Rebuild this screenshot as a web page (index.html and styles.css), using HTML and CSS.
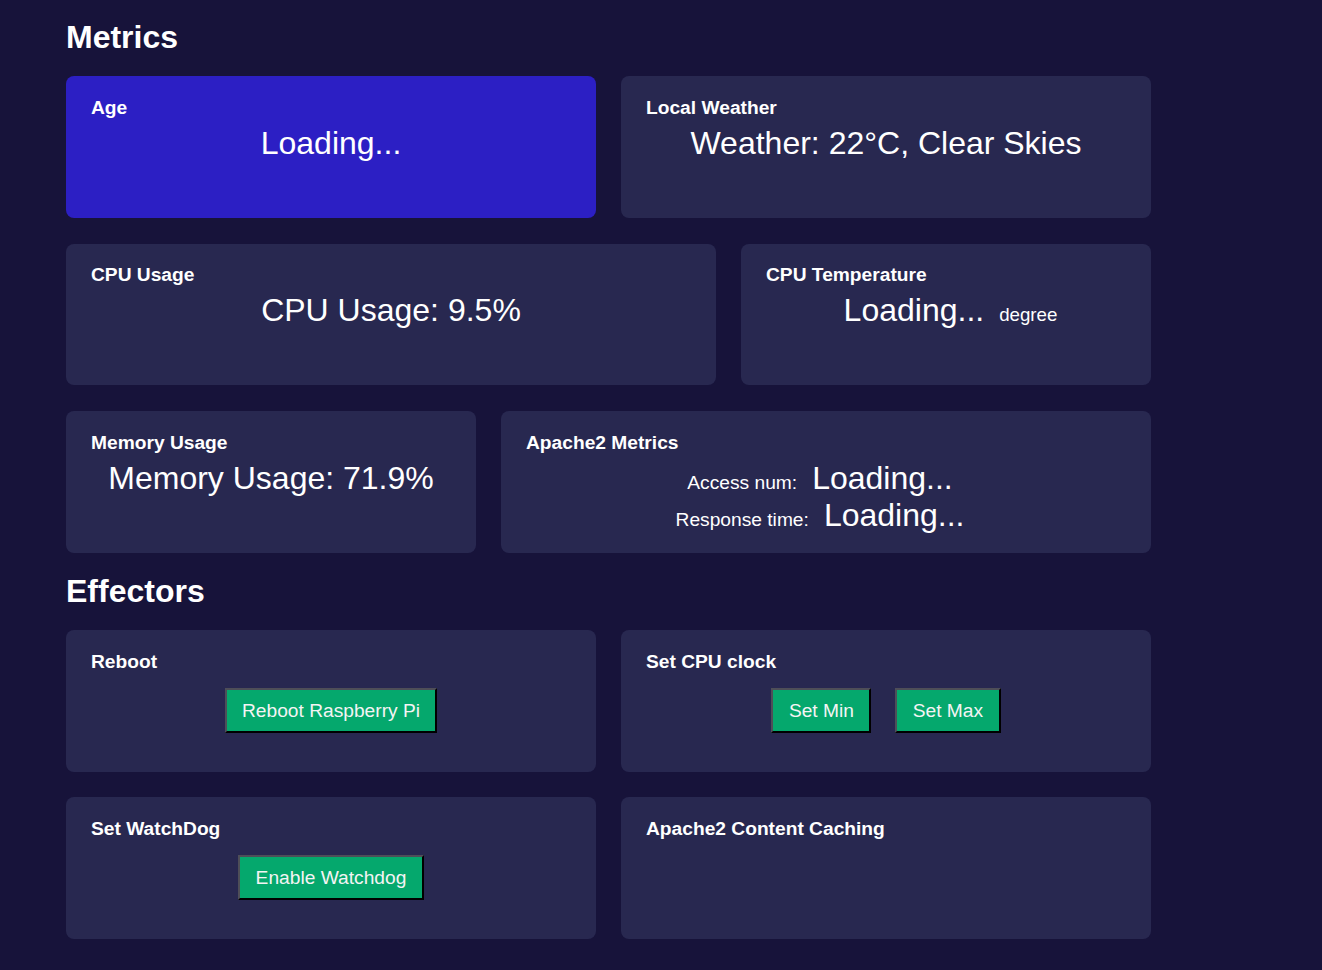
FILE: index.html
```html
<!DOCTYPE html>
<html lang="en">
<head>
<meta charset="utf-8">
<title>Dashboard</title>
<link rel="stylesheet" href="styles.css">
</head>
<body>
<main class="page">
  <h1 class="section-title first">Metrics</h1>
  <div class="rows">
    <div class="row">
      <section class="card card-accent half">
        <h3 class="card-title">Age</h3>
        <div class="value">Loading...</div>
      </section>
      <section class="card half">
        <h3 class="card-title">Local Weather</h3>
        <div class="value">Weather: 22°C, Clear Skies</div>
      </section>
    </div>
    <div class="row">
      <section class="card wide">
        <h3 class="card-title">CPU Usage</h3>
        <div class="value">CPU Usage: 9.5%</div>
      </section>
      <section class="card narrow">
        <h3 class="card-title">CPU Temperature</h3>
        <div class="value temp"><span>Loading...</span><span class="unit">degree</span></div>
      </section>
    </div>
    <div class="row">
      <section class="card narrow">
        <h3 class="card-title">Memory Usage</h3>
        <div class="value">Memory Usage: 71.9%</div>
      </section>
      <section class="card wide">
        <h3 class="card-title">Apache2 Metrics</h3>
        <div class="value pair"><span class="label">Access num:</span><span class="big">Loading...</span></div>
        <div class="value pair tight"><span class="label">Response time:</span><span class="big">Loading...</span></div>
      </section>
    </div>
  </div>

  <h1 class="section-title second">Effectors</h1>
  <div class="rows eff">
    <div class="row">
      <section class="card half">
        <h3 class="card-title">Reboot</h3>
        <div class="actions"><button class="btn">Reboot Raspberry Pi</button></div>
      </section>
      <section class="card half">
        <h3 class="card-title">Set CPU clock</h3>
        <div class="actions"><button class="btn">Set Min</button><button class="btn">Set Max</button></div>
      </section>
    </div>
    <div class="row">
      <section class="card half">
        <h3 class="card-title">Set WatchDog</h3>
        <div class="actions"><button class="btn">Enable Watchdog</button></div>
      </section>
      <section class="card half">
        <h3 class="card-title">Apache2 Content Caching</h3>
      </section>
    </div>
  </div>
</main>
</body>
</html>
```

FILE: styles.css
```css
html, body {
  margin: 0;
  padding: 0;
}
body {
  background: #17133a;
  color: #ffffff;
  font-family: "Liberation Sans", Arial, sans-serif;
  min-height: 970px;
}
.page {
  width: 1085px;
  padding-left: 66px;
}
.section-title {
  font-size: 32px;
  font-weight: bold;
  line-height: normal;
  margin: 20.5px 0 20px;
}
.section-title.first {
  margin: 18.5px 0 20.7px;
  padding-top: 0.1px;
}
.rows {
  display: flex;
  flex-direction: column;
  gap: 26px;
}
.rows.eff {
  gap: 25.5px;
}
.row {
  display: flex;
  gap: 25px;
}
.card {
  box-sizing: border-box;
  height: 141.5px;
  padding: 20.5px 25px 0;
  background: #282850;
  border-radius: 8px;
}
.card-accent {
  background: #2c1fc4;
}
.half { flex: 1 1 0; }
.wide { flex: 0 0 650px; }
.narrow { flex: 0 0 410px; }
.card-title {
  margin: 0;
  font-size: 19.2px;
  font-weight: bold;
  line-height: normal;
}
.value {
  margin-top: 6px;
  font-size: 32px;
  line-height: normal;
  text-align: center;
}
.value.tight {
  margin-top: 0.5px;
}
.temp {
  padding-left: 9px;
}
.unit {
  font-size: 18.72px;
  margin-left: 15px;
}
.pair {
  padding-right: 12px;
}
.pair .label {
  font-size: 19.2px;
}
.pair .big {
  margin-left: 15px;
}
.actions {
  margin-top: 15.5px;
  display: flex;
  justify-content: center;
  gap: 24px;
}
.btn {
  font-family: "Liberation Sans", Arial, sans-serif;
  font-size: 19.2px;
  line-height: normal;
  padding: 9.6px 15.4px;
  margin: 0;
  color: #f4f4f4;
  background: #05a86d;
  border: 2px solid;
  border-color: #4e4e58 #000000 #000000 #4e4e58;
  border-radius: 0;
}
```
